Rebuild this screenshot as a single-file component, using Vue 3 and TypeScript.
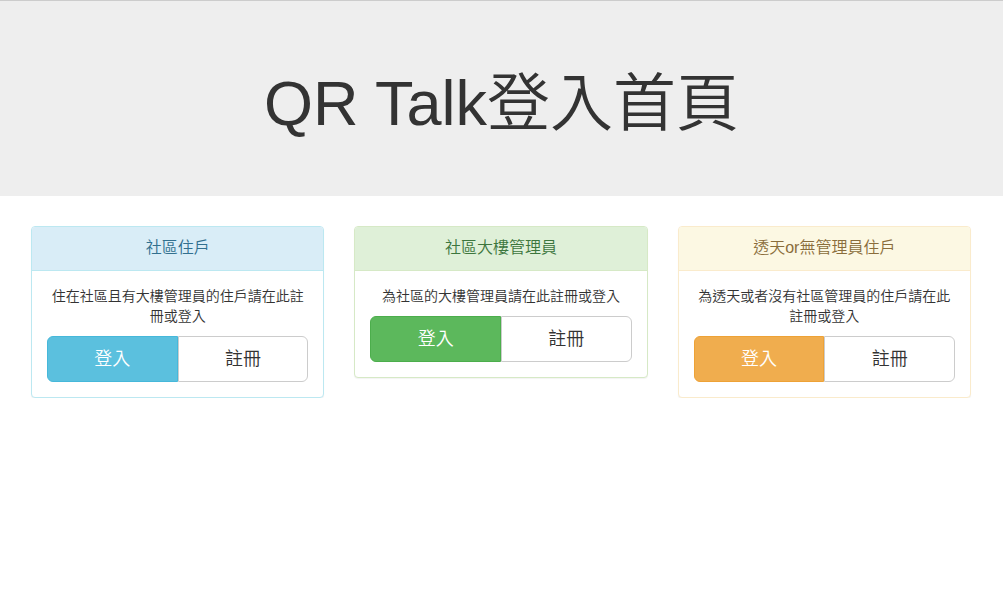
<script setup lang="ts">
interface Panel {
  id: string
  theme: 'info' | 'success' | 'warning'
  title: string
  text: string
}

const panels: Panel[] = [
  { id: 'resident', theme: 'info', title: '社區住戶', text: '住在社區且有大樓管理員的住戶請在此註冊或登入' },
  { id: 'manager', theme: 'success', title: '社區大樓管理員', text: '為社區的大樓管理員請在此註冊或登入' },
  { id: 'house', theme: 'warning', title: '透天or無管理員住戶', text: '為透天或者沒有社區管理員的住戶請在此註冊或登入' },
]
</script>

<template>
  <div class="page">
    <header class="jumbotron">
      <h1>QR Talk登入首頁</h1>
    </header>
    <main class="panels">
      <section v-for="panel in panels" :key="panel.id" class="panel" :class="panel.theme">
        <h2 class="heading">{{ panel.title }}</h2>
        <div class="body">
          <p>{{ panel.text }}</p>
          <div class="buttons">
            <button type="button" class="btn login">登入</button>
            <button type="button" class="btn register">註冊</button>
          </div>
        </div>
      </section>
    </main>
  </div>
</template>

<style>
body {
  margin: 0;
  background: #fff;
}
</style>

<style scoped>
.page,
.page * {
  box-sizing: border-box;
}

.page {
  font-family: "Liberation Sans", "Noto Sans CJK TC", sans-serif;
  font-size: 14px;
  font-weight: 350;
  line-height: 20px;
  color: #333;
  text-align: center;
}

.jumbotron {
  padding: 68px 60px 58px;
  border-top: 1px solid #ccc;
  background: #eee;
}

h1 {
  margin: 0;
  font-size: 63px;
  font-weight: inherit;
  line-height: 69px;
}

.panels {
  display: grid;
  grid-template-columns: repeat(3, 1fr);
  align-items: start;
  gap: 30px;
  padding: 30px 32px 0 31px;
}

.panel {
  border: 1px solid;
  border-radius: 4px;
  background: #fff;
  box-shadow: 0 1px 1px rgba(0, 0, 0, 0.05);
}

.heading {
  margin: 0;
  padding: 9px 15px 11px;
  border-bottom: 1px solid;
  border-radius: 3px 3px 0 0;
  font-size: 16px;
  font-weight: inherit;
  line-height: 23px;
}

.panel.info,
.info .heading {
  border-color: #bce8f1;
}

.info .heading {
  color: #31708f;
  background: #d9edf7;
}

.panel.success,
.success .heading {
  border-color: #d6e9c6;
}

.success .heading {
  color: #3c763d;
  background: #dff0d8;
}

.panel.warning,
.warning .heading {
  border-color: #faebcc;
}

.warning .heading {
  color: #8a6d3b;
  background: #fcf8e3;
}

.body {
  padding: 15px;
}

p {
  margin: 0 0 10px;
}

.buttons {
  display: flex;
}

.btn {
  flex: 1;
  height: 46px;
  padding: 0 16px;
  border: 1px solid #ccc;
  font-family: inherit;
  font-size: 18px;
  font-weight: inherit;
  line-height: 24px;
  color: #333;
  background: #fff;
  cursor: pointer;
}

.login {
  border-radius: 6px 0 0 6px;
  color: #fff;
}

.register {
  border-radius: 0 6px 6px 0;
}

.info .login {
  background: #5bc0de;
  border-color: #46b8da;
}

.success .login {
  background: #5cb85c;
  border-color: #4cae4c;
}

.warning .login {
  background: #f0ad4e;
  border-color: #eea236;
}
</style>
